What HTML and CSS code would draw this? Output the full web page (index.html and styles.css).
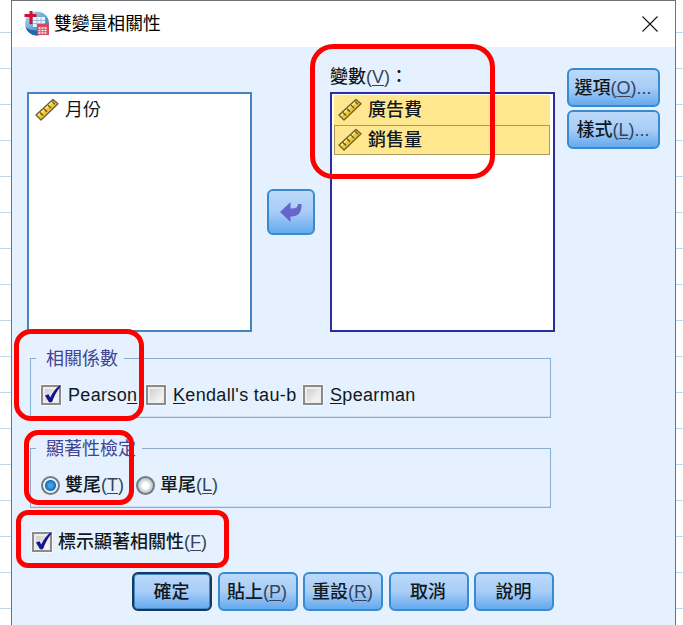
FILE: index.html
```html
<!DOCTYPE html>
<html lang="zh-Hant">
<head>
<meta charset="utf-8">
<title>雙變量相關性</title>
<link rel="stylesheet" href="styles.css">
</head>
<body>
<svg class="defs" width="0" height="0" aria-hidden="true">
  <defs>
    <symbol id="ruler" viewBox="0 0 24 24">
      <path d="M1 17 18 1.500 23 5.800 6 22Z" fill="#f0c72c" stroke="#6b6034" stroke-width="1.400" stroke-linejoin="round"/>
      <path d="M3 17.500 18 3.500" stroke="#fff0a0" stroke-width="1.200"/>
      <path d="m5 14.500 3 3m1-6.700 3 3m1-6.700 3 3m1-6.700 3 3" stroke="#5d501f" stroke-width="1.300"/>
    </symbol>
    <symbol id="tick" viewBox="0 0 22 22">
      <path d="m5 11.500 3.500-1.300 1.700 3.300C12.500 8.500 15.500 4.500 20 1.200L20.500 2.500C16.500 7.500 14 12.500 12 18.200H9Z" fill="#14148c"/>
    </symbol>
    <linearGradient id="globe" x1="0" x2="1" y2="1">
      <stop offset="0" stop-color="#c7dff0"/><stop offset=".55" stop-color="#5fa0ce"/><stop offset="1" stop-color="#2469a7"/>
    </linearGradient>
  </defs>
</svg>
<main class="dialog">
  <header class="titlebar">
    <svg class="app-icon" viewBox="0 0 26 26">
      <circle cx="13" cy="12.500" r="12" fill="url(#globe)"/>
      <path d="M1.500 16A12 12 0 0 0 14 24.500v-5Q7 20 1.500 16Z" fill="#2369ab"/>
      <path d="M9 6h12v10H9Z" fill="#eef6fb"/>
      <path d="M9 9.500h12m-12 3h12m-8-6v9m4-9v9" stroke="#91bdd9"/>
      <path d="M7 0v13M.5 4.500h12" stroke="#d30f35" stroke-width="3"/>
      <path d="M13 13h12v11H13Z" fill="#d54c61"/>
      <path d="M14.500 17h9m-9 2.500h9m-9 2.500h9" stroke="#fff" stroke-width="1.500" stroke-dasharray="2 1"/>
    </svg>
    <h1>雙變量相關性</h1>
    <svg class="close" viewBox="0 0 16 16"><path d="m.5.5 15 15m0-15-15 15" stroke="#111" stroke-width="1.100"/></svg>
  </header>

  <section class="picker">
    <div class="list source">
      <div class="item"><svg><use href="#ruler"/></svg><span>月份</span></div>
    </div>
    <button class="btn move"><svg viewBox="0 0 22 20"><path d="M0 10 10.500 0v6.500Q18 7 18 2h3.500Q22 15 10.500 14.500V20Z" fill="#6665cc"/></svg></button>
    <div class="target-column">
      <div class="target-label">變數<span class="key">(<u>V</u>)</span>：</div>
      <div class="list target">
        <div class="item selected"><svg><use href="#ruler"/></svg><span>廣告費</span></div>
        <div class="item selected focused"><svg><use href="#ruler"/></svg><span>銷售量</span></div>
      </div>
    </div>
    <div class="side">
      <button class="btn">選項<span class="key">(<u>O</u>)...</span></button>
      <button class="btn">樣式<span class="key">(<u>L</u>)...</span></button>
    </div>
  </section>

  <fieldset class="group coefficients">
    <legend>相關係數</legend>
    <div class="choices">
      <span class="box"><svg><use href="#tick"/></svg></span><span class="latin pearson">Pearso<u>n</u></span>
      <span class="box"></span><span class="latin kendall"><u>K</u>endall's tau-b</span>
      <span class="box"></span><span class="latin"><u>S</u>pearman</span>
    </div>
  </fieldset>

  <fieldset class="group significance">
    <legend>顯著性檢定</legend>
    <div class="choices">
      <span class="radio on"></span><span class="two">雙尾<span class="key">(<u>T</u>)</span></span>
      <span class="radio"></span><span>單尾<span class="key">(<u>L</u>)</span></span>
    </div>
  </fieldset>

  <div class="flag"><span class="box"><svg><use href="#tick"/></svg></span><span>標示顯著相關性<span class="key">(<u>F</u>)</span></span></div>

  <footer class="actions">
    <button class="btn default">確定</button>
    <button class="btn">貼上<span class="key">(<u>P</u>)</span></button>
    <button class="btn">重設<span class="key">(<u>R</u>)</span></button>
    <button class="btn">取消</button>
    <button class="btn">說明</button>
  </footer>
</main>
<div class="mark mark-variables"></div>
<div class="mark mark-pearson"></div>
<div class="mark mark-tails"></div>
<div class="mark mark-flag"></div>
</body>
</html>
```
FILE: styles.css
```css
* { box-sizing: border-box; }

body {
  margin: 0;
  height: 625px;
  overflow: hidden;
  position: relative;
  font: 18px/26px "Liberation Sans", "Noto Sans CJK TC", sans-serif;
  color: #101820;
  background: repeating-linear-gradient(#fff 0 32px, #bdd7ec 32px 33px, #fff 33px 36px);
}

.defs { position: absolute; }

.dialog {
  width: 665px;
  height: 640px;
  margin-left: 11px;
  border: 1px solid #6d7178;
  background: #e5f1fe;
}

.titlebar {
  height: 46px;
  padding: 0 17px 0 12px;
  display: flex;
  align-items: center;
  background: #fff;
}

.app-icon { width: 26px; height: 26px; margin-right: 4px; }
h1 { margin: 0; font-size: 17.8px; font-weight: 400; color: #000; }
.close { width: 16px; height: 16px; margin-left: auto; }

.picker {
  display: flex;
  align-items: flex-start;
  padding: 0 15px;
  height: 310px;
}

.list { width: 225px; height: 240px; padding: 1px 3px; background: #fff; }
.source { margin-top: 45px; border: 2px solid #4686bd; }
.target { border: 2px solid #2b2e9c; }
.item { height: 30px; display: flex; align-items: center; padding-left: 3px; }
.item svg { width: 24px; height: 24px; margin-right: 6px; }
.target .item { padding-left: 4px; }
.target { padding: 1px 3px 0 2px; }
.selected { background: #ffe78f; font-weight: 500; }
.target .focused { border: 1px solid #ab9a5d; padding-left: 3px; }

.target-column { margin-left: 15px; }
.target-label { height: 45px; padding-top: 17px; white-space: nowrap; font-weight: 500; }
.key { color: #34445a; font-weight: 400; }
u { text-decoration-thickness: 1px; text-underline-offset: 2px; }

.btn {
  display: flex;
  align-items: center;
  justify-content: center;
  width: 80px;
  height: 39px;
  padding: 0 1px 0 0;
  border: 2px solid #398bd0;
  border-radius: 6px;
  background: linear-gradient(#bcd9fa, #a8cdf7 50%, #64a9ed);
  font: inherit;
  font-weight: 500;
  color: #101820;
  white-space: nowrap;
}

.move { width: 48px; height: 46px; padding: 0 0 1px; margin: 142px 0 0 15px; }
.move svg { width: 22px; height: 20px; }
.side { display: grid; gap: 3px; margin: 21px 0 0 12px; }
.side .btn { width: 93px; }

.group {
  width: 521px;
  height: 73px;
  margin: 0 0 0 18px;
  padding: 0;
  border: 1px solid #89aed2;
  box-shadow: inset 0 -1px #cce1f5;
}

.group legend {
  height: 26px;
  margin-left: 5px;
  padding: 2px 6px 0 10px;
  line-height: 24px;
  color: #414493;
}

.coefficients { margin-top: -12px; }
.significance { margin-top: 17px; }
.choices { display: flex; align-items: center; height: 26px; padding-left: 10px; white-space: nowrap; }
.coefficients .choices { margin-top: 11px; }
.significance .choices { margin-top: 11px; font-weight: 500; }

.box {
  flex: none;
  width: 20px;
  height: 20px;
  border: 2px solid #8b8b8b;
  outline: 1px solid #f6f8fa;
  box-shadow: inset 0 0 0 2px #ededed;
  background: linear-gradient(135deg, #c9c9c9, #fff);
}
.box svg { display: block; width: 22px; height: 22px; margin: -3px; }

.latin { margin-left: 7px; letter-spacing: .33px; }
.pearson { width: 71px; margin-right: 7px; }
.kendall { width: 125px; margin-right: 5px; }

.radio {
  flex: none;
  width: 19px;
  height: 19px;
  border: 2px solid #737b80;
  border-radius: 50%;
  background: radial-gradient(circle, #fff 0 3px, #dce2e6 5px, #bdc8ce 7px);
  margin-right: 5px;
}
.radio.on { background: radial-gradient(circle, #3da1e6 0 2px, #1769b4 5px, #e9f1f5 6px); }
.two { width: 71px; }

.flag { display: flex; align-items: center; height: 26px; margin: 21px 0 0 20px; font-weight: 500; }
.flag .box { margin-right: 6px; }

.actions { display: flex; gap: 5.500px; margin: 17px 0 0 120px; }
.default { border-color: #18395b; box-shadow: inset 0 0 0 1px #4388c7; }

/* Hand-drawn emphasis outlines above the dialog */
.mark { position: absolute; border: 5px solid #fe0000; }
.mark-variables { left: 310px; top: 44px; width: 185px; height: 135px; border-radius: 23px; }
.mark-pearson { left: 14px; top: 329px; width: 130px; height: 92px; border-radius: 17px; }
.mark-tails { left: 24px; top: 430px; width: 110px; height: 75px; border-radius: 14px; }
.mark-flag { left: 16px; top: 510px; width: 213px; height: 58px; border-radius: 12px; }
```
